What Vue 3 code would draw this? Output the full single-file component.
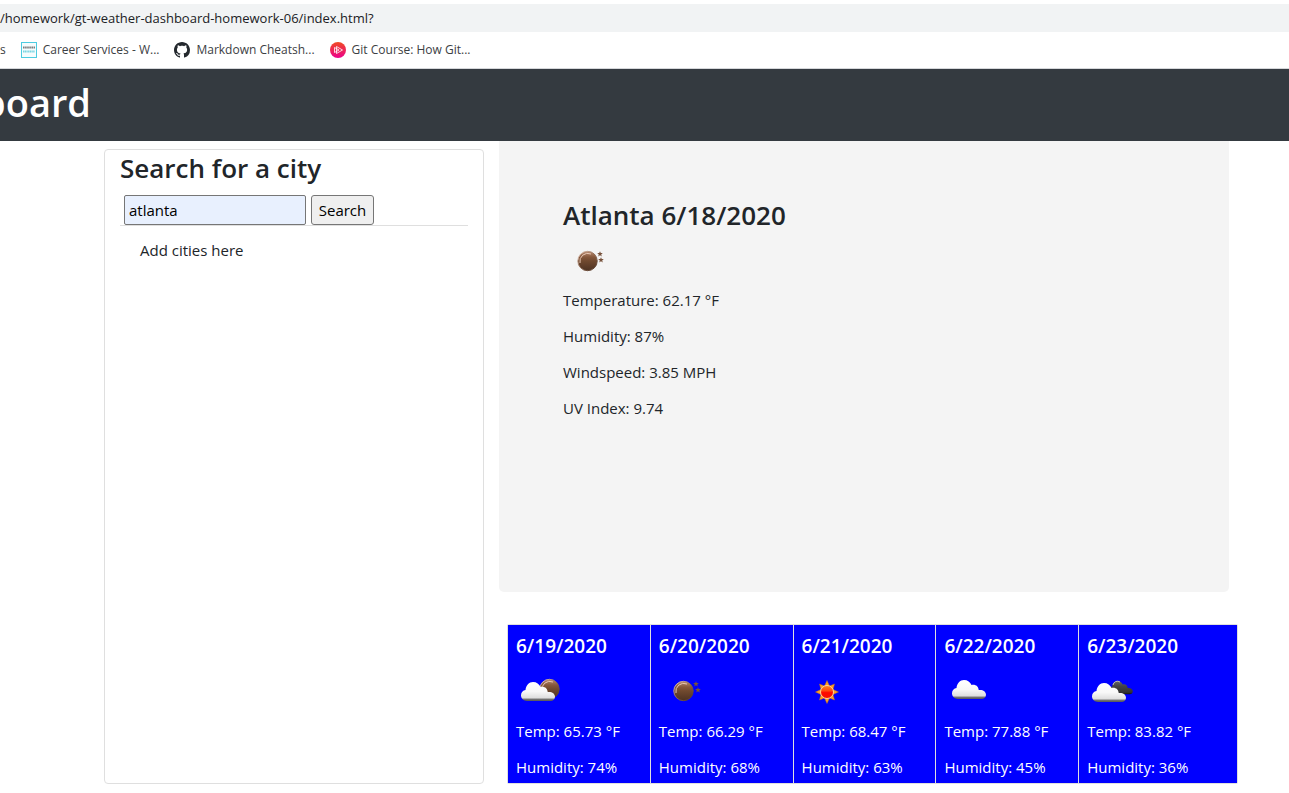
<script setup>
import { ref } from 'vue'

const address = ref('/homework/gt-weather-dashboard-homework-06/index.html?')
const city = ref('atlanta')
const conditions = [
  'Temperature: 62.17 °F',
  'Humidity: 87%',
  'Windspeed: 3.85 MPH',
  'UV Index: 9.74',
]
const forecast = [
  { date: '6/19/2020', icon: 'cloud-moon', temp: '65.73', humidity: 74 },
  { date: '6/20/2020', icon: 'moon', temp: '66.29', humidity: 68 },
  { date: '6/21/2020', icon: 'sun', temp: '68.47', humidity: 63 },
  { date: '6/22/2020', icon: 'cloud', temp: '77.88', humidity: 45 },
  { date: '6/23/2020', icon: 'clouds', temp: '83.82', humidity: 36 },
]
</script>

<template>
  <div class="page">
    <svg class="defs" width="0" height="0" aria-hidden="true">
      <defs>
        <linearGradient id="moonFill" x1="0" y1="0" x2="0" y2="1">
          <stop offset="0" stop-color="#b98b70" />
          <stop offset="0.3" stop-color="#85573b" />
          <stop offset="0.5" stop-color="#70492f" />
          <stop offset="1" stop-color="#4d3222" />
        </linearGradient>
        <linearGradient id="moonRim" x1="0" y1="0" x2="1" y2="1">
          <stop offset="0" stop-color="#f3d8c8" />
          <stop offset="0.5" stop-color="#8a6650" />
          <stop offset="1" stop-color="#4d3222" />
        </linearGradient>
        <linearGradient id="cloudFill" x1="0" y1="0" x2="0" y2="1">
          <stop offset="0" stop-color="#ffffff" />
          <stop offset="0.5" stop-color="#f8f8f8" />
          <stop offset="0.84" stop-color="#dedede" />
          <stop offset="0.9" stop-color="#777777" />
          <stop offset="1" stop-color="#555555" />
        </linearGradient>
        <linearGradient id="darkCloud" x1="0" y1="0" x2="0" y2="1">
          <stop offset="0" stop-color="#666666" />
          <stop offset="0.4" stop-color="#444444" />
          <stop offset="0.85" stop-color="#333333" />
          <stop offset="1" stop-color="#111111" />
        </linearGradient>
        <linearGradient id="sunFill" x1="0" y1="0" x2="0" y2="1">
          <stop offset="0" stop-color="#ff8a20" />
          <stop offset="0.4" stop-color="#ff4a10" />
          <stop offset="0.55" stop-color="#ff0800" />
          <stop offset="1" stop-color="#f81000" />
        </linearGradient>
        <linearGradient id="playFill" x1="0" y1="0" x2="0" y2="1">
          <stop offset="0" stop-color="#f04b23" />
          <stop offset="1" stop-color="#ec008c" />
        </linearGradient>
        <g id="moonShape">
          <circle cx="24.500" cy="25" r="9.700" fill="url(#moonFill)" stroke="url(#moonRim)" stroke-width="1" />
          <path d="M17 27a8 8 0 0 1 11-9" fill="none" stroke="#e8c8b5" stroke-width="1" />
        </g>
        <path id="starShape" d="M0-2.8 .8-.9 2.800-.9 1.200.4 1.800 2.500 0 1.300-1.800 2.500-1.200.4-2.800-.9-.8-.9Z" fill="#77523c" />
        <path id="cloudShape" d="M6 19C2.500 19 0 16.500 0 13.300 0 10.400 2 8.400 4.500 8 5 3.500 8 0 12 0c3.700 0 6.200 2 7.500 5 4-1 7 1.500 7.200 5 4-.6 7.300 1.500 7.300 4.800 0 2.500-1.900 4.200-4.300 4.200Z" />
      </defs>
    </svg>

    <header class="browser">
      <input v-model="address" class="address" type="text" aria-label="Address" />
      <nav class="bookmarks" aria-label="Bookmarks">
        <a class="bookmark" href="#">s</a>
        <a class="bookmark" href="#">
          <svg width="16" height="16" viewBox="0 0 16 16" aria-hidden="true">
            <rect x=".5" y=".5" width="15" height="15" fill="#f6fcfd" stroke="#4dcbe0" />
            <path d="M2 5.500h12" stroke="#555" stroke-width="2" stroke-dasharray="1.600 .5" opacity=".75" />
            <path d="M2 9.500h12" stroke="#7bd5e2" stroke-width="2" stroke-dasharray="1.300 .4" />
          </svg>
          <span>Career Services - W...</span>
        </a>
        <a class="bookmark" href="#">
          <svg width="16" height="16" viewBox="0 0 16 16" aria-hidden="true">
            <path fill="#24292e" d="M8 0C3.580 0 0 3.580 0 8c0 3.540 2.290 6.530 5.470 7.590.4.070.55-.17.55-.38 0-.19-.01-.82-.01-1.490-2.010.37-2.530-.49-2.690-.94-.09-.23-.48-.94-.82-1.130-.28-.15-.68-.52-.01-.53.63-.01 1.080.58 1.230.82.72 1.210 1.870.87 2.330.66.07-.52.28-.87.51-1.070-1.780-.2-3.640-.89-3.640-3.950 0-.87.31-1.590.82-2.150-.08-.2-.36-1.020.08-2.120 0 0 .67-.21 2.200.82.64-.18 1.320-.27 2-.27s1.360.09 2 .27c1.530-1.040 2.200-.82 2.200-.82.44 1.100.16 1.920.08 2.120.51.56.82 1.270.82 2.150 0 3.070-1.870 3.750-3.650 3.950.29.25.54.73.54 1.480 0 1.070-.01 1.930-.01 2.200 0 .21.15.46.55.38A8 8 0 0 0 16 8c0-4.420-3.580-8-8-8Z" />
          </svg>
          <span>Markdown Cheatsh...</span>
        </a>
        <a class="bookmark" href="#">
          <svg width="16" height="16" viewBox="0 0 16 16" aria-hidden="true">
            <circle cx="8" cy="8" r="8" fill="url(#playFill)" />
            <path d="M6.500 4.500 12.500 8l-6 3.500ZM4.500 5.500v5L9 8Z" fill="none" stroke="#fff" stroke-width=".8" />
          </svg>
          <span>Git Course: How Git...</span>
        </a>
      </nav>
    </header>

    <div class="navbar"><h1>board</h1></div>

    <main class="content">
      <aside class="search-card">
        <h2>Search for a city</h2>
        <form class="search-form" @submit.prevent>
          <input v-model="city" type="text" aria-label="City" />
          <button type="submit">Search</button>
        </form>
        <p class="cities">Add cities here</p>
      </aside>

      <div class="results">
        <section class="current">
          <h2>Atlanta 6/18/2020</h2>
          <svg class="weather" width="50" height="50" viewBox="0 0 50 50" role="img" aria-label="Clear night">
            <use href="#moonShape" />
            <use href="#starShape" x="37" y="18" />
            <use href="#starShape" x="38" y="24" />
          </svg>
          <p v-for="line in conditions" :key="line">{{ line }}</p>
        </section>

        <section class="forecast" aria-label="Five day forecast">
          <article v-for="day in forecast" :key="day.date" class="day">
            <h3>{{ day.date }}</h3>
            <svg class="weather" width="50" height="50" viewBox="0 0 50 50" role="img" :aria-label="day.icon">
              <template v-if="day.icon === 'cloud-moon'">
                <use href="#moonShape" x="9" y="-2" />
                <use href="#cloudShape" x="5" y="16" fill="url(#cloudFill)" />
              </template>
              <template v-else-if="day.icon === 'moon'">
                <use href="#moonShape" />
                <use href="#starShape" x="37" y="18" />
                <use href="#starShape" x="39" y="24" />
              </template>
              <template v-else-if="day.icon === 'sun'">
                <path d="M25 14.500 27.500 20 32.500 18 31 23.500 36.500 26 31 28.500 32.500 34 27.500 32 25 37.500 22.500 32 17.500 34 19 28.500 13.500 26 19 23.500 17.500 18 22.500 20Z" fill="#ffa126" stroke="#b66a22" stroke-width=".5" />
                <circle cx="25" cy="26" r="6.500" fill="url(#sunFill)" stroke="#ffd69a" stroke-width="1" />
              </template>
              <use v-else-if="day.icon === 'cloud'" href="#cloudShape" x="8" y="14" fill="url(#cloudFill)" />
              <template v-else>
                <g transform="translate(22 15) scale(.7)"><use href="#cloudShape" fill="url(#darkCloud)" /></g>
                <path d="M26 19a4.500 4.500 0 0 1 7-3" fill="none" stroke="#bbb" />
                <use href="#cloudShape" x="5" y="17" fill="url(#cloudFill)" />
              </template>
            </svg>
            <p>Temp: {{ day.temp }} °F</p>
            <p>Humidity: {{ day.humidity }}%</p>
          </article>
        </section>
      </div>
    </main>
  </div>
</template>

<style>
body {
  margin: 0;
  background: #fff;
}
</style>

<style scoped>
.page {
  font-family: "Open Sans", "Noto Sans", sans-serif;
  font-size: 15px;
  line-height: 24px;
  color: #212529;
  overflow-x: hidden;
}
.page * {
  box-sizing: border-box;
}
.defs {
  position: absolute;
}
h1, h2, h3, p {
  margin: 0;
}
.browser {
  padding-top: 4px;
  border-bottom: 1px solid #d5d7da;
}
.address {
  display: block;
  width: 100%;
  height: 28px;
  padding: 0;
  border: 0;
  background: #f1f3f4;
  color: #202124;
  font-family: inherit;
  font-size: 13px;
}
.bookmarks {
  display: flex;
  align-items: center;
  gap: 15px;
  height: 36px;
}
.bookmark {
  display: flex;
  align-items: center;
  gap: 6px;
  color: #3c4043;
  font-size: 12px;
  line-height: 16px;
  text-decoration: none;
  white-space: nowrap;
}
.navbar {
  display: flex;
  height: 72px;
  background: #343a40;
}
.navbar h1 {
  display: flex;
  justify-content: flex-end;
  width: 91px;
  padding-top: 9px;
  color: #fff;
  font-size: 38px;
  font-weight: 600;
  line-height: 48px;
}
.content {
  display: grid;
  grid-template-columns: 380fr 730fr;
  gap: 15px;
  padding: 0 60px 9px 104px;
}
.search-card {
  margin-top: 8px;
  padding: 0 15px;
  border: 1px solid #dfdfdf;
  border-radius: 4px;
}
h2 {
  font-size: 26px;
  font-weight: 600;
  line-height: 36px;
}
.search-form {
  display: flex;
  gap: 5px;
  margin-top: 9px;
  padding-left: 4px;
  border-bottom: 1px solid #dfdfdf;
}
.search-form input {
  width: 182px;
  height: 30px;
  padding: 0 4px;
  border: 1px solid #767676;
  border-radius: 2px;
  background: #e8f0fe;
  color: #000;
  font: inherit;
}
.search-form button {
  width: 63px;
  height: 30px;
  padding: 0;
  border: 1px solid #767676;
  border-radius: 3px;
  background: #efefef;
  color: #000;
  font: inherit;
}
.cities {
  padding: 12px 20px;
}
.current {
  min-height: 451px;
  padding: 56px 64px;
  border-radius: 0 0 5px 5px;
  background: #f4f4f4;
}
.weather {
  display: block;
}
.current .weather {
  margin-top: 3px;
}
.current p {
  margin-bottom: 12px;
}
.current .weather + p {
  margin-top: 2px;
}
.forecast {
  display: grid;
  grid-template-columns: repeat(4, 143fr) 159fr;
  margin: 32px -9px 0 8px;
  border: 1px solid #dfdfdf;
  border-left: 0;
  border-radius: 2px;
}
.day {
  padding: 9px 7px 4px 8px;
  border-left: 1px solid #dfdfdf;
  background: #00f;
  color: #fff;
}
.day h3 {
  font-size: 19px;
  font-weight: 600;
  line-height: 24px;
}
.day .weather {
  margin: 8px 0 3px;
}
.day p + p {
  margin-top: 12px;
}
</style>
